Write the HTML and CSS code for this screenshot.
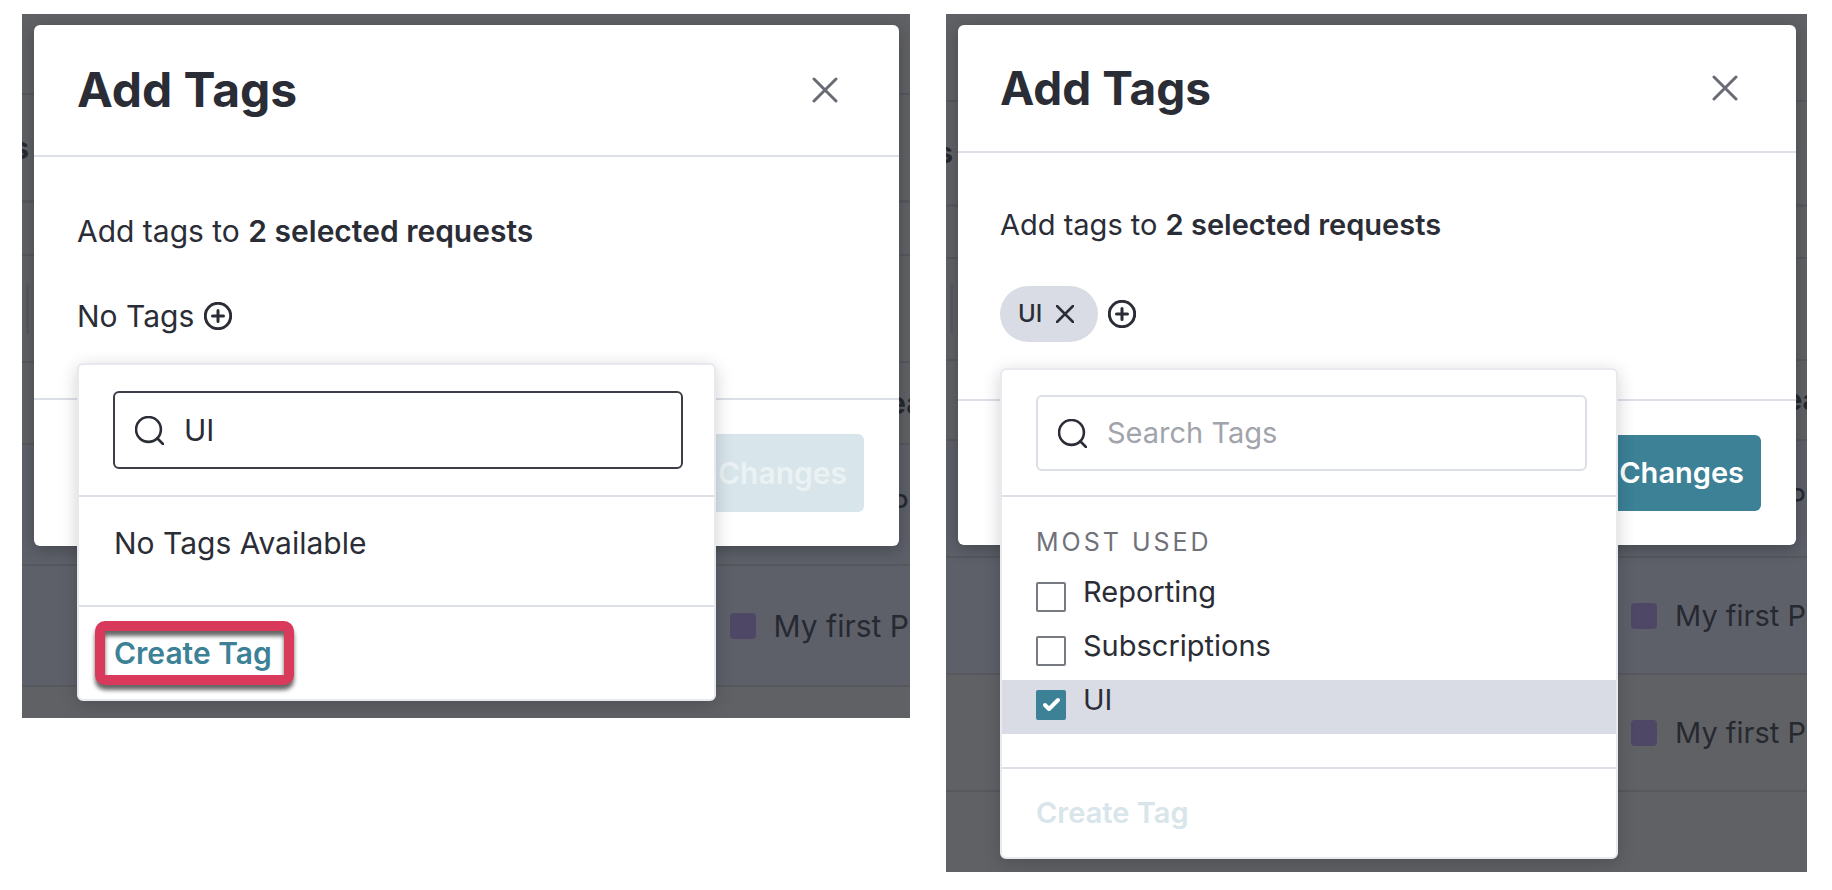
FILE: index.html
```
<!DOCTYPE html>
<html lang="en">
  <head>
    <meta charset="utf-8" />
    <meta name="viewport" content="width=device-width, initial-scale=1.0" />
    <title>Add Tags</title>
    <link rel="stylesheet" href="styles.css">
  </head>
  <body>
    <!-- searching for a tag that does not exist yet -->
    <section class="panel">
      <div class="backdrop">
        <div class="row row-top"></div>
        <div class="row row-head"><b class="cut-left">s</b></div>
        <div class="row row-gap"></div>
        <div class="row row-tall"><i class="bar"></i></div>
        <div class="row row-sub"><b class="cut-right">ea</b></div>
        <div class="row row-item selected"><span class="project"><i class="swatch"></i>My first P</span></div>
        <div class="row row-item selected"><span class="project"><i class="swatch"></i>My first P</span></div>
        <div class="row row-last"></div>
      </div>
      <div class="modal">
        <div class="modal-header">
          <h1>Add Tags</h1>
          <button class="close" aria-label="Close">
            <svg viewBox="0 0 26 26"><path d="M2 2l22 22M24 2L2 24" /></svg>
          </button>
        </div>
        <div class="modal-body">
          <p>Add tags to <strong>2 selected requests</strong></p>
          <div class="tags">
            <span>No Tags</span>
            <button class="add" aria-label="Add tag">
              <svg viewBox="0 0 28 28"><circle cx="14" cy="14" r="12.7" /><path d="M14 8.5v11M8.5 14h11" /></svg>
            </button>
            <div class="dropdown">
              <div class="dropdown-search">
                <label class="search active">
                  <svg viewBox="0 0 28 28"><circle cx="13" cy="13" r="12" /><path d="M21.5 21.5L27 27" /></svg>
                  <input type="text" value="UI" aria-label="Search Tags" />
                </label>
              </div>
              <div class="empty">No Tags Available</div>
              <div class="dropdown-footer">
                <button class="create highlight">Create Tag</button>
              </div>
            </div>
          </div>
        </div>
        <div class="modal-footer">
          <button class="btn" disabled>Save Changes</button>
        </div>
      </div>
    </section>

    <!-- tag created and ticked -->
    <section class="panel compact">
      <div class="backdrop">
        <div class="row row-top"></div>
        <div class="row row-head"><b class="cut-left">s</b></div>
        <div class="row row-gap"></div>
        <div class="row row-tall"><i class="bar"></i></div>
        <div class="row row-sub"><b class="cut-right">ea</b></div>
        <div class="row row-item selected"><span class="project"><i class="swatch"></i>My first P</span></div>
        <div class="row row-item selected"><span class="project"><i class="swatch"></i>My first P</span></div>
        <div class="row row-item"><span class="project"><i class="swatch"></i>My first P</span></div>
        <div class="row row-last"></div>
      </div>
      <div class="modal">
        <div class="modal-header">
          <h1>Add Tags</h1>
          <button class="close" aria-label="Close">
            <svg viewBox="0 0 26 26"><path d="M2 2l22 22M24 2L2 24" /></svg>
          </button>
        </div>
        <div class="modal-body">
          <p>Add tags to <strong>2 selected requests</strong></p>
          <div class="tags">
            <span class="chip">
              UI
              <button class="remove" aria-label="Remove UI">
                <svg viewBox="0 0 18 18"><path d="M1 1l16 16M17 1L1 17" /></svg>
              </button>
            </span>
            <button class="add" aria-label="Add tag">
              <svg viewBox="0 0 28 28"><circle cx="14" cy="14" r="12.7" /><path d="M14 8.5v11M8.5 14h11" /></svg>
            </button>
            <div class="dropdown">
              <div class="dropdown-search">
                <label class="search">
                  <svg viewBox="0 0 28 28"><circle cx="13" cy="13" r="12" /><path d="M21.5 21.5L27 27" /></svg>
                  <input type="text" placeholder="Search Tags" aria-label="Search Tags" />
                </label>
              </div>
              <div class="options">
                <h2>MOST USED</h2>
                <label class="option">
                  <span class="check"><input type="checkbox" /></span>
                  Reporting
                </label>
                <label class="option">
                  <span class="check"><input type="checkbox" /></span>
                  Subscriptions
                </label>
                <label class="option checked">
                  <span class="check">
                    <input type="checkbox" checked />
                    <svg viewBox="0 0 30 30"><path d="M9 15l4 4 9-9" /></svg>
                  </span>
                  UI
                </label>
              </div>
              <div class="dropdown-footer">
                <button class="create" disabled>Create Tag</button>
              </div>
            </div>
          </div>
        </div>
        <div class="modal-footer">
          <button class="btn">Save Changes</button>
        </div>
      </div>
    </section>
  </body>
</html>
```

FILE: styles.css
```
* {
  box-sizing: border-box;
}
body {
  --line: #dcdfe6;
  --ink: #2b2d36;
  --teal: #3c8196;
  margin: 0;
  padding: 14px 25px 14px 22px;
  background: #fff;
  color: var(--ink);
  font: 30px/40px Inter, sans-serif;
  display: flex;
  align-items: flex-start;
  gap: 36px;
}
h1,
h2,
p {
  margin: 0;
}
button,
input {
  font: inherit;
  color: inherit;
}
button {
  padding: 0;
  border: none;
  background: none;
  cursor: pointer;
}
svg {
  display: block;
  fill: none;
  stroke: currentColor;
  stroke-width: 3;
  stroke-linecap: round;
  stroke-linejoin: round;
}
strong {
  font-weight: 600;
}

.panel {
  --title: 48px;
  --text: 30px;
  --head: 132px;
  --head-pad: 0 61px 0 43px;
  --body-pad: 54px 43px;
  --body-gap: 37px;
  --drop: 19px;
  --control: 78px;
  --search-pad: 26px 31px 26px 34px;
  --foot-pad: 26px 35px;
  --r1: 81px;
  --r2: 108px;
  --r3: 53px;
  --r4: 107px;
  --r5: 82px;
  --r6: 121px;
  --r7: 31px;
  flex: 888 1 0;
  min-width: 0;
  display: grid;
  grid-template-columns: minmax(0, 1fr);
  align-items: start;
  font-size: var(--text);
  overflow: hidden;
}
.panel.compact {
  --title: 46px;
  --text: 29px;
  --head: 128px;
  --head-pad: 0 58px 0 42px;
  --body-pad: 52px 42px 57px;
  --body-gap: 41px;
  --drop: 26px;
  --control: 76px;
  --search-pad: 25px 29px 24px 34px;
  --foot-pad: 24px 34px;
  --r1: 88px;
  --r2: 105px;
  --r3: 52px;
  --r4: 102px;
  --r5: 80px;
  --r6: 117px;
  --r7: 80px;
  flex-grow: 861;
}
.backdrop,
.modal {
  grid-area: 1 / 1;
}

/* dimmed table behind the dialog */
.backdrop {
  background: #606165;
  color: #272931;
}
.row {
  display: flex;
  align-items: center;
  border-bottom: 2px solid #57585d;
}
.row-top {
  height: var(--r1);
}
.row-head {
  height: var(--r2);
  border-bottom-width: 3px;
}
.row-gap {
  height: var(--r3);
}
.row-tall {
  height: var(--r4);
}
.row-sub {
  height: var(--r5);
}
.row-item {
  height: var(--r6);
}
.row-last {
  height: var(--r7);
  border: none;
}
.selected {
  background: #5d6069;
}
.cut-left {
  width: 7px;
  display: flex;
  justify-content: flex-end;
  overflow: hidden;
}
.cut-right {
  width: 22px;
  margin-left: auto;
  overflow: hidden;
}
.bar {
  width: 3px;
  height: 50px;
  margin-left: 4px;
  background: #595a5f;
}
.project {
  margin-left: auto;
  padding-right: 1px;
  display: flex;
  align-items: center;
  gap: 18px;
}
.swatch {
  width: 26px;
  height: 26px;
  border-radius: 4px;
  background: #4e4766;
}

.modal {
  margin: 11px 11px 0 12px;
  background: #fff;
  border-radius: 6px;
  box-shadow: 0 4px 16px rgba(0, 0, 0, 0.25);
}
.modal-header {
  height: var(--head);
  padding: var(--head-pad);
  display: flex;
  align-items: center;
  justify-content: space-between;
  border-bottom: 2px solid var(--line);
}
h1 {
  font-size: var(--title);
  line-height: 60px;
}
.close {
  color: #686b73;
}
.close svg {
  width: 26px;
  height: 26px;
}
.modal-body {
  padding: var(--body-pad);
}
.tags {
  position: relative;
  height: 56px;
  margin-top: var(--body-gap);
  display: flex;
  align-items: center;
  gap: 10px;
}
.add svg {
  width: 28px;
  height: 28px;
}
.chip {
  height: 56px;
  padding: 0 24px 0 18px;
  display: flex;
  align-items: center;
  gap: 14px;
  border-radius: 28px;
  background: #d9dce4;
  font-size: 24px;
  font-weight: 500;
}
.remove svg {
  width: 18px;
  height: 18px;
  stroke-width: 2.5;
}
.modal-footer {
  padding: 34px 35px;
  display: flex;
  justify-content: flex-end;
  border-top: 2px solid var(--line);
}
.btn {
  height: var(--control);
  padding: 0 17px;
  border-radius: 6px;
  background: var(--teal);
  color: #fff;
  font-weight: 600;
}
.btn:disabled {
  background: #d8e5ea;
  color: #ebf2f4;
}

.dropdown {
  position: absolute;
  top: 100%;
  left: 0;
  width: 82%;
  margin-top: var(--drop);
  background: #fff;
  border: 2px solid #e8e9ef;
  border-radius: 6px;
  box-shadow: 0 4px 18px rgba(0, 0, 0, 0.18);
}
.dropdown-search {
  padding: var(--search-pad);
  border-bottom: 2px solid var(--line);
}
.search {
  height: var(--control);
  padding: 0 20px;
  display: flex;
  align-items: center;
  gap: 20px;
  border: 2px solid var(--line);
  border-radius: 6px;
}
.search.active {
  border-color: #3c3d46;
}
.search svg {
  flex: none;
  width: 29px;
  height: 29px;
  stroke-width: 2.5;
}
.search input {
  flex: 1;
  min-width: 0;
  padding: 0;
  border: none;
  outline: none;
  background: none;
}
.search input::placeholder {
  color: #a1a4ab;
  opacity: 1;
}
.empty {
  padding: 26px 35px 42px;
}
.dropdown-footer {
  padding: var(--foot-pad);
  border-top: 2px solid var(--line);
}
.create {
  display: block;
  position: relative;
  color: var(--teal);
  font-weight: 600;
}
.create:disabled {
  color: #d8e5ea;
}
/* callout frame around the button */
.highlight::after {
  content: '';
  position: absolute;
  inset: -12px -22px -12px -19px;
  border: 10px solid #d93a5b;
  border-radius: 10px;
  filter: drop-shadow(0 5px 2px rgba(0, 0, 0, 0.6));
}
.options {
  padding: 30px 0 33px;
}
h2 {
  margin-bottom: 15px;
  padding: 0 34px;
  color: #6f7279;
  font-size: 25px;
  font-weight: 400;
  line-height: 30px;
  letter-spacing: 3px;
}
.option {
  height: 54px;
  padding: 0 34px;
  display: flex;
  align-items: flex-start;
  gap: 17px;
}
.option.checked {
  background: #d9dce4;
}
.check {
  display: grid;
  margin-top: 10px;
}
.check input,
.check svg {
  grid-area: 1 / 1;
  width: 30px;
  height: 30px;
}
.check input {
  appearance: none;
  margin: 0;
  border: 2px solid #787a82;
  border-radius: 2px;
  background: #fff;
}
.check input:checked {
  border-color: var(--teal);
  background: var(--teal);
}
.check svg {
  z-index: 1;
  color: #fff;
  stroke-width: 4;
}
```
